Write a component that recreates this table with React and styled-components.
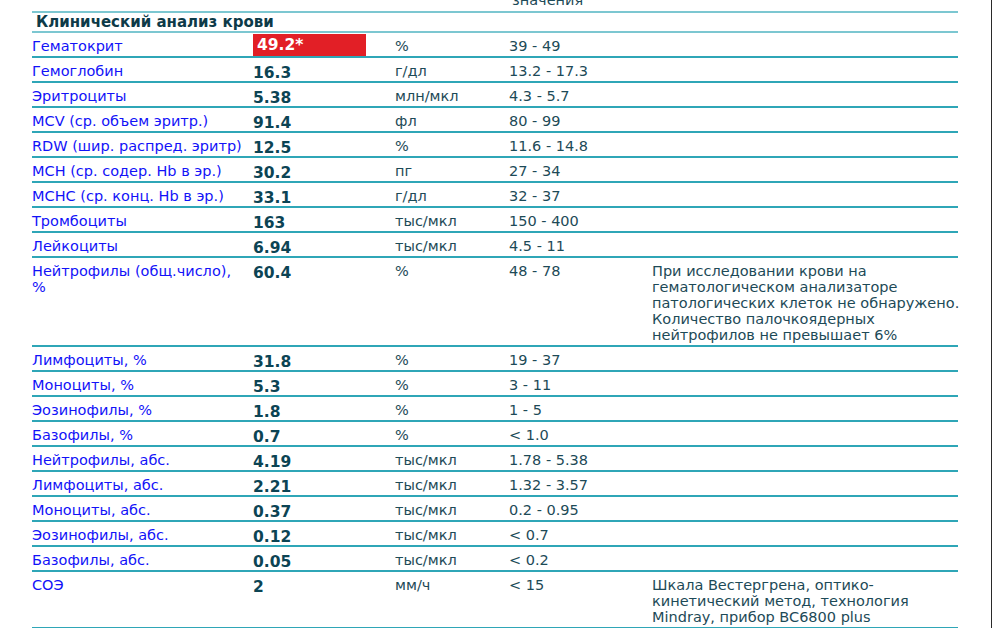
import React from 'react';
import styled, {createGlobalStyle} from "styled-components";

const GlobalStyle = createGlobalStyle`
  html, body {
    margin: 0;
    padding: 0;
    background: #fff;
    overflow: hidden;
  }
  body {
    font-family: "DejaVu Sans", Verdana, sans-serif;
    font-size: 14.5px;
  }
`;

const Page = styled.div`
  height: 628px;
  width: 992px;
  display: flex;
  border-right: 1px solid #2a2a2a;
  box-sizing: border-box;
  overflow: hidden;
`;

const Table = styled.div`
  margin: -24px 0 0 32px;
  width: 926px;
  display: flex;
  flex-direction: column;
`;

const Row = styled.div`
  display: grid;
  grid-template-columns: 221px 142px 114px 143px 1fr;
  padding: ${({head}) => head ? "0 0 3px" : "5px 0 2px"};
  border-bottom: 2px solid ${({light}) => light ? "#7cc7d1" : "#2fa6b7"};
  line-height: 16px;
  color: #1d4a57;
`;

const HeadCell = styled.div`
  grid-column: ${({col}) => col};
  padding-left: 3px;
  color: #1d4a57;
`;

const SectionRow = styled.div`
  border-bottom: 2px solid #7cc7d1;
  height: 21px;
  display: flex;
  align-items: center;
  padding-left: 4px;
`;

const SectionTitle = styled.h3`
  margin: 0;
  font-size: 15px;
  font-weight: bold;
  color: #0d3a48;
`;

const Name = styled.div`
  color: #1212f8;
  padding-right: 6px;
`;

const Value = styled.div`
  font-weight: bold;
  font-size: 15.5px;
  line-height: 16px;
  height: 14px;
  padding-top: 2px;
  color: #0c4454;
`;

const Flag = styled.span`
  display: block;
  width: 109px;
  height: 22px;
  line-height: 22px;
  margin: -6px 0 0;
  padding-left: 4px;
  background-color: #e21f26;
  color: #fff;
`;

const Cell = styled.div``;

const Comment = styled.div`
  white-space: nowrap;
`;

const rows = [
  {name: "Гематокрит", value: "49.2*", unit: "%", ref: "39 - 49", flag: true},
  {name: "Гемоглобин", value: "16.3", unit: "г/дл", ref: "13.2 - 17.3"},
  {name: "Эритроциты", value: "5.38", unit: "млн/мкл", ref: "4.3 - 5.7"},
  {name: "MCV (ср. объем эритр.)", value: "91.4", unit: "фл", ref: "80 - 99"},
  {name: "RDW (шир. распред. эритр)", value: "12.5", unit: "%", ref: "11.6 - 14.8"},
  {name: "MCH (ср. содер. Hb в эр.)", value: "30.2", unit: "пг", ref: "27 - 34"},
  {name: "MCHC (ср. конц. Hb в эр.)", value: "33.1", unit: "г/дл", ref: "32 - 37"},
  {name: "Тромбоциты", value: "163", unit: "тыс/мкл", ref: "150 - 400"},
  {name: "Лейкоциты", value: "6.94", unit: "тыс/мкл", ref: "4.5 - 11"},
  {
    name: "Нейтрофилы (общ.число), %", value: "60.4", unit: "%", ref: "48 - 78",
    comment: [
      "При исследовании крови на",
      "гематологическом анализаторе",
      "патологических клеток не обнаружено.",
      "Количество палочкоядерных",
      "нейтрофилов не превышает 6%",
    ],
  },
  {name: "Лимфоциты, %", value: "31.8", unit: "%", ref: "19 - 37"},
  {name: "Моноциты, %", value: "5.3", unit: "%", ref: "3 - 11"},
  {name: "Эозинофилы, %", value: "1.8", unit: "%", ref: "1 - 5"},
  {name: "Базофилы, %", value: "0.7", unit: "%", ref: "< 1.0"},
  {name: "Нейтрофилы, абс.", value: "4.19", unit: "тыс/мкл", ref: "1.78 - 5.38"},
  {name: "Лимфоциты, абс.", value: "2.21", unit: "тыс/мкл", ref: "1.32 - 3.57"},
  {name: "Моноциты, абс.", value: "0.37", unit: "тыс/мкл", ref: "0.2 - 0.95"},
  {name: "Эозинофилы, абс.", value: "0.12", unit: "тыс/мкл", ref: "< 0.7"},
  {name: "Базофилы, абс.", value: "0.05", unit: "тыс/мкл", ref: "< 0.2"},
  {
    name: "СОЭ", value: "2", unit: "мм/ч", ref: "< 15",
    comment: [
      "Шкала Вестергрена, оптико-",
      "кинетический метод, технология",
      "Mindray, прибор BC6800 plus",
    ],
  },
];

const App = () => {
  return (
    <Page>
      <GlobalStyle />
      <Table>
        <Row head light>
          <HeadCell col={4}>Референсные<br />значения</HeadCell>
        </Row>
        <SectionRow>
          <SectionTitle>Клинический анализ крови</SectionTitle>
        </SectionRow>
        {rows.map((item, index) => (
          <Row key={index}>
            <Name>{item.name}</Name>
            <Value>{item.flag ? <Flag>{item.value}</Flag> : item.value}</Value>
            <Cell>{item.unit}</Cell>
            <Cell>{item.ref}</Cell>
            <Comment>
              {item.comment && item.comment.map((line, i) => (
                <div key={i}>{line}</div>
              ))}
            </Comment>
          </Row>
        ))}
      </Table>
    </Page>
  );
};

export default App;
